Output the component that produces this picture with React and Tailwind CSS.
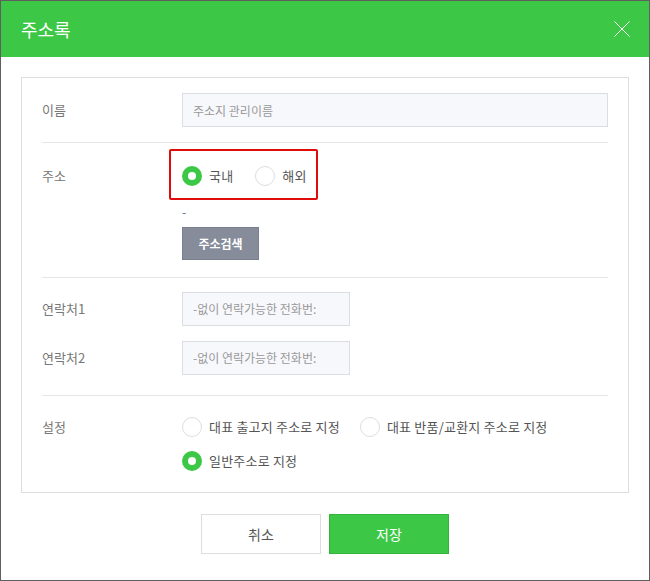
import React from "react";

const Radio = ({ checked, label }) => (
  <label className="flex items-center h-5 cursor-pointer">
    {checked ? (
      <span className="w-5 h-5 rounded-full bg-[#3cc846] flex items-center justify-center">
        <span className="w-2 h-2 rounded-full bg-white" />
      </span>
    ) : (
      <span className="w-5 h-5 rounded-full border border-[#dcdde3] bg-white" />
    )}
    <span className="ml-[7px] text-[13px] tracking-[0.2px] text-[#555]">{label}</span>
  </label>
);

const Label = ({ children }) => (
  <div className="w-[140px] shrink-0 text-[13px] text-[#777]">{children}</div>
);

const App = () => {
  return (
    <div
      className="w-[650px] h-[581px] border border-[#5f5f5f] bg-white flex flex-col"
      style={{ fontFamily: '"Noto Sans CJK KR", "Noto Sans", sans-serif' }}
    >
      {/* 헤더 */}
      <div className="h-[56px] bg-[#3cc846] flex items-center justify-between pl-[20px] pr-[19px]">
        <h1 className="text-[18px] text-white">주소록</h1>
        <button className="w-4 h-4">
          <svg width="16" height="16" viewBox="0 0 16 16" fill="none" stroke="white" strokeWidth="1">
            <path d="M0.5 0.5 L15.5 15.5 M15.5 0.5 L0.5 15.5" />
          </svg>
        </button>
      </div>

      <div className="px-[20px] pt-[20px]">
        <div className="border border-[#dddddd] px-[20px]">
          {/* 이름 */}
          <div className="flex items-center py-[15px] border-b border-[#e6e6e6]">
            <Label>이름</Label>
            <input
              className="w-[426px] h-[34px] bg-[#f7f8fc] border border-[#dcdde3] px-[10px] text-[12px] placeholder:text-[#999] outline-none"
              placeholder="주소지 관리이름"
            />
          </div>

          {/* 주소 */}
          <div className="flex pt-[23px] pb-[17px] border-b border-[#e6e6e6]">
            <div className="h-5 flex items-center">
              <Label>주소</Label>
            </div>
            <div className="flex flex-col">
              <div className="relative flex items-center gap-[22px]">
                <Radio checked label="국내" />
                <Radio label="해외" />
                <div className="absolute left-[-13px] top-[-17px] w-[149px] h-[51px] border-2 border-[#e00b0b] rounded-[2px]" />
              </div>
              <div className="mt-[18px] h-[16px] text-[12px] leading-[16px] text-[#4a6a8a]">-</div>
              <button className="mt-[7px] w-[77px] h-[33px] bg-[#878c9b] border border-[#7a7f8d] text-white text-[12px] font-bold">
                주소검색
              </button>
            </div>
          </div>

          {/* 연락처 */}
          <div className="flex flex-col gap-[15px] pt-[14px] pb-[20px] border-b border-[#e6e6e6]">
            <div className="flex items-center">
              <Label>연락처1</Label>
              <div className="w-[168px] h-[34px] bg-[#f7f8fc] border border-[#dcdde3] pl-[10px] flex items-center text-[12px] text-[#999] overflow-hidden whitespace-nowrap">
                -없이 연락가능한 전화번:
              </div>
            </div>
            <div className="flex items-center">
              <Label>연락처2</Label>
              <div className="w-[168px] h-[34px] bg-[#f7f8fc] border border-[#dcdde3] pl-[10px] flex items-center text-[12px] text-[#999] overflow-hidden whitespace-nowrap">
                -없이 연락가능한 전화번:
              </div>
            </div>
          </div>

          {/* 설정 */}
          <div className="flex pt-[21px] pb-[21px]">
            <div className="h-5 flex items-center">
              <Label>설정</Label>
            </div>
            <div className="flex flex-col gap-[14px]">
              <div className="flex items-center gap-[20px]">
                <Radio label="대표 출고지 주소로 지정" />
                <Radio label="대표 반품/교환지 주소로 지정" />
              </div>
              <Radio checked label="일반주소로 지정" />
            </div>
          </div>
        </div>
      </div>

      {/* 버튼 */}
      <div className="flex justify-center gap-[8px] mt-[21px]">
        <button className="w-[120px] h-[40px] bg-white border border-[#dddddd] text-[14px] text-[#555]">
          취소
        </button>
        <button className="w-[120px] h-[40px] bg-[#3cc846] border border-[#34b33e] text-[14px] text-white">
          저장
        </button>
      </div>
    </div>
  );
};

export default App;
